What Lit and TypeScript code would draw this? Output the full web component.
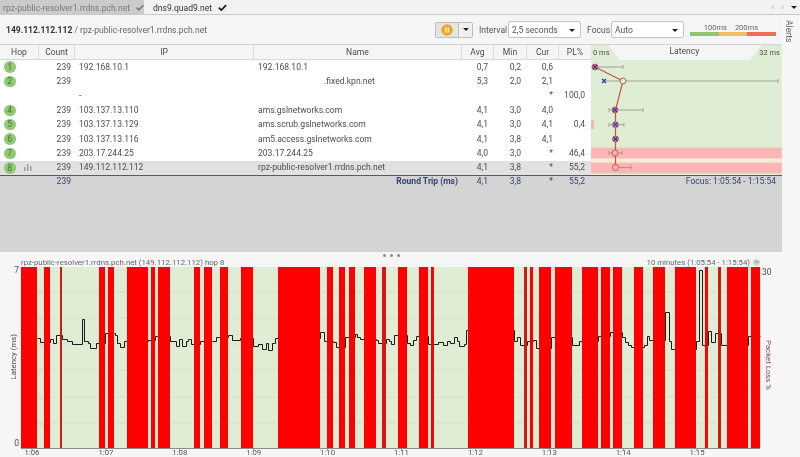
import { LitElement, css, html, svg } from 'lit';
import { customElement } from 'lit/decorators.js';

interface Hop {
  n: string;
  ip: string;
  name: string;
  avg: string;
  min: string;
  cur: string;
  pl: string;
}

const HOPS: Hop[] = [
  { n: '1', ip: '192.168.10.1', name: '192.168.10.1', avg: '0,7', min: '0,2', cur: '0,6', pl: '' },
  { n: '2', ip: '', name: '.fixed.kpn.net', avg: '5,3', min: '2,0', cur: '2,1', pl: '' },
  { n: '', ip: '-', name: '', avg: '', min: '', cur: '*', pl: '100,0' },
  { n: '4', ip: '103.137.13.110', name: 'ams.gslnetworks.com', avg: '4,1', min: '3,0', cur: '4,0', pl: '' },
  { n: '5', ip: '103.137.13.129', name: 'ams.scrub.gslnetworks.com', avg: '4,1', min: '3,0', cur: '4,1', pl: '0,4' },
  { n: '6', ip: '103.137.13.116', name: 'am5.access.gslnetworks.com', avg: '4,1', min: '3,8', cur: '4,1', pl: '' },
  { n: '7', ip: '203.17.244.25', name: '203.17.244.25', avg: '4,0', min: '3,0', cur: '*', pl: '46,4' },
  { n: '8', ip: '149.112.112.112', name: 'rpz-public-resolver1.rrdns.pch.net', avg: '4,1', min: '3,8', cur: '*', pl: '55,2' },
];

// packet loss bars, [x1, x2] on the page
const LOSS: number[][] = [
  [21, 37], [44, 50], [60, 62], [99, 105], [108, 114], [127, 148], [151, 155], [158, 170], [194, 200],
  [204, 212], [220, 228], [241, 253], [278, 320], [327, 333], [339, 345], [349, 355], [364, 376],
  [382, 386], [398, 407], [419, 428], [431, 434], [468, 514], [524, 527], [530, 533], [539, 551],
  [555, 572], [582, 598], [601, 610], [613, 622], [634, 643], [653, 665], [675, 696], [705, 708],
  [718, 721], [727, 748], [751, 760],
];
const DARK = [60, 382, 524, 718];

// latency steps: x where the step starts, y of the step
const STEPS: number[][] = [
  [37, 338], [40, 342], [50, 339], [53, 343], [56, 335], [62, 339], [67, 341], [72, 344], [82, 319],
  [84, 341], [88, 343], [90, 348], [96, 343], [105, 333], [115, 335], [117, 343], [120, 347], [124, 341],
  [148, 340], [155, 336], [170, 341], [176, 346], [179, 339], [182, 346], [186, 341], [188, 339],
  [191, 344], [200, 341], [212, 341], [216, 337], [228, 335], [232, 340], [240, 338], [253, 346],
  [258, 344], [262, 349], [266, 343], [268, 350], [272, 343], [275, 338], [320, 332], [324, 341],
  [333, 342], [336, 347], [345, 337], [355, 334], [357, 337], [360, 339], [376, 340], [378, 343],
  [386, 339], [389, 341], [391, 344], [394, 335], [407, 343], [410, 345], [413, 340], [416, 336],
  [428, 344], [438, 342], [443, 345], [447, 341], [450, 343], [454, 337], [457, 341], [459, 346],
  [464, 344], [466, 330], [514, 341], [517, 337], [520, 345], [527, 341], [533, 340], [536, 348],
  [551, 337], [572, 345], [579, 341], [598, 336], [610, 332], [622, 337], [625, 342], [628, 345],
  [631, 347], [644, 345], [647, 336], [649, 340], [665, 312], [669, 341], [671, 349], [696, 341],
  [699, 270], [702, 345], [708, 331], [711, 342], [715, 333], [721, 345], [748, 336], [760, 336],
];

const GRID = [292, 318, 344, 370, 397, 423];
const TIMES = ['1:06', '1:07', '1:08', '1:09', '1:10', '1:11', '1:12', '1:13', '1:14', '1:15'];

function stepPoints() {
  const out: string[] = [];
  let prevY = STEPS[0][1];
  for (const [x, y] of STEPS) {
    out.push(`${x + 0.5},${prevY + 0.5}`, `${x + 0.5},${y + 0.5}`);
    prevY = y;
  }
  return out.join(' ');
}

const check = (color: string) => html`<svg class="check" viewBox="0 0 10 8" width="9" height="7">
  <path d="M0.8 4.2 L3.6 7 L9.2 1.2" fill="none" stroke=${color} stroke-width="2"></path>
</svg>`;

@customElement('app-root')
export class AppRoot extends LitElement {
  static styles = css`
    :host {
      display: flex;
      flex-direction: column;
      width: 800px;
      height: 457px;
      overflow: hidden;
      background: #f6f6f6;
      color: #4d4d4d;
      font: 8.55px Roboto, sans-serif;
      filter: blur(0.25px);
    }

    .tabs {
      display: flex;
      align-items: center;
      flex: none;
      height: 15px;
      box-sizing: border-box;
      background: #f2f2f2;
      border-bottom: 1.5px solid #c9c9c9;
    }
    .tab {
      display: flex;
      align-items: center;
      height: 100%;
      gap: 6px;
      padding-top: 1px;
      box-sizing: border-box;
      white-space: nowrap;
    }
    .tab.off {
      width: 144px;
      flex: none;
      padding-left: 3px;
      background: #cbcbcb;
      color: #777;
    }
    .tab.on {
      padding-left: 9px;
      color: #333;
    }
    .tabnav {
      display: flex;
      align-items: center;
      gap: 7px;
      margin-left: auto;
      padding-right: 3px;
      color: #aaa;
      font-size: 9px;
    }

    .body {
      display: flex;
      flex: 1;
      min-height: 0;
    }
    .content {
      display: flex;
      flex-direction: column;
      width: 782px;
      flex: none;
    }
    .rail {
      flex: 1;
      padding: 5px 6px 0 0;
      color: #666;
      writing-mode: vertical-rl;
    }

    .toolbar {
      display: flex;
      align-items: center;
      flex: none;
      height: 30px;
      padding-left: 6px;
      box-sizing: border-box;
      border-bottom: 1.5px solid #d4d4d4;
      background: #f5f5f5;
      color: #666;
    }
    .toolbar b {
      color: #333;
      font-weight: 700;
    }
    .where {
      width: 429px;
      flex: none;
      padding-top: 1px;
    }
    .pause {
      display: flex;
      flex: none;
      width: 38px;
      height: 16px;
      border: 1px solid #bdbdbd;
      border-radius: 2px;
      background: #e4e4e4;
      box-sizing: border-box;
    }
    .pause .main {
      display: flex;
      align-items: center;
      justify-content: center;
      width: 22px;
      border-right: 1px solid #bdbdbd;
    }
    .pause .more {
      display: flex;
      align-items: center;
      justify-content: center;
      flex: 1;
      background: #f0f0f0;
    }
    .caret {
      width: 0;
      height: 0;
      border-left: 3px solid transparent;
      border-right: 3px solid transparent;
      border-top: 3px solid #222;
    }
    .lbl {
      flex: none;
      margin-left: 6px;
      color: #555;
    }
    .lbl.interval {
      width: 29px;
    }
    .lbl.focus {
      width: 24px;
    }
    .select {
      display: flex;
      align-items: center;
      justify-content: space-between;
      flex: none;
      width: 73px;
      height: 17px;
      padding: 1px 5px 0 3px;
      box-sizing: border-box;
      border: 1px solid #c4c4c4;
      border-radius: 2px;
      background: #fff;
      color: #555;
    }
    .legend {
      width: 86px;
      margin-left: 6px;
      flex: none;
    }
    .legend .nums {
      display: flex;
      justify-content: flex-end;
      gap: 8px;
      padding-right: 18px;
      font-size: 7.5px;
      line-height: 9px;
    }
    .legend .bar {
      display: flex;
      height: 4px;
    }
    .legend .bar i {
      flex: 1;
    }
    .legend .good {
      background: #8fc56e;
    }
    .legend .warn {
      background: #f4bf62;
    }
    .legend .bad {
      background: #ec6f5c;
    }

    .hops {
      display: flex;
      flex: none;
      height: 130px;
      background: #fff;
    }
    .table {
      width: 591px;
      flex: none;
    }
    .row,
    .head {
      display: grid;
      grid-template-columns: 39px 36px 179px 208px 32px 33px 32px 32px;
      align-items: center;
    }
    .row {
      height: 14.375px;
      line-height: 15px;
    }
    .row.selected {
      background: #e1e1e1;
    }
    .row > span {
      white-space: nowrap;
      overflow: hidden;
    }
    .head {
      height: 15px;
      line-height: 15px;
      box-sizing: border-box;
      border-bottom: 1px solid #d8d8d8;
      background: #f5f5f5;
      align-items: stretch;
    }
    .head span {
      text-align: center;
      border-right: 1px solid #dcdcdc;
    }
    .head span:last-child {
      border-right: 0;
    }
    .hopcell {
      display: flex;
      align-items: center;
      gap: 8px;
      padding-left: 4px;
    }
    .badge {
      display: flex;
      align-items: center;
      justify-content: center;
      width: 11.5px;
      height: 11.5px;
      border-radius: 50%;
      background: #93c878;
      color: #3c7f28;
      font-size: 8.5px;
      line-height: 1;
    }
    .num {
      text-align: right;
      padding-right: 6px;
    }
    .num.count {
      padding-right: 4px;
    }
    .txt {
      padding-left: 4px;
    }
    .txt.masked {
      padding-left: 70px;
    }

    .latency {
      display: flex;
      flex-direction: column;
      flex: 1;
      background: #e0edd5;
    }
    .lat-head {
      position: relative;
      display: flex;
      justify-content: space-between;
      flex: none;
      height: 15px;
      padding: 1px 2px 0;
      box-sizing: border-box;
      font-size: 7.5px;
      line-height: 13px;
    }
    .lat-head::before {
      content: '';
      position: absolute;
      inset: 0;
      background: #f5f5f5;
      clip-path: polygon(17px 0, 171px 0, 159px 100%, 29px 100%);
    }
    .lat-head span {
      position: relative;
    }
    .lat-head .title {
      font-size: 8.55px;
      margin-top: -1px;
    }
    .latency svg {
      display: block;
    }

    .summary {
      flex: none;
      height: 77px;
      border-top: 1.5px solid #5a5a5a;
      background: #d4d4d4;
      color: #33456e;
      box-sizing: border-box;
    }
    .summary .row {
      grid-template-columns: 39px 36px 387px 32px 33px 32px 32px 1fr;
      height: 11px;
      line-height: 11px;
    }
    .summary b {
      text-align: right;
      padding-right: 4px;
      font-weight: 700;
    }
    .summary .focus {
      text-align: right;
      padding-right: 6px;
    }

    .chart {
      display: flex;
      flex-direction: column;
      flex: 1;
      min-height: 0;
    }
    .chart-head {
      position: relative;
      display: flex;
      align-items: center;
      justify-content: space-between;
      flex: none;
      height: 15px;
      padding: 5px 22px 0 21px;
      box-sizing: border-box;
      color: #666;
      font-size: 7.8px;
    }
    .range {
      display: flex;
      align-items: center;
      gap: 3px;
    }
    .chev {
      display: flex;
      align-items: center;
      justify-content: center;
      width: 7px;
      height: 7px;
      border-radius: 50%;
      background: #d4d4d4;
    }
    .grip {
      position: absolute;
      left: 383px;
      top: 2px;
      display: flex;
      gap: 4px;
    }
    .grip i {
      width: 3px;
      height: 3px;
      border-radius: 50%;
      background: #888;
    }
    .plot {
      display: flex;
      flex: 1;
      min-height: 0;
    }
    .plot svg {
      display: block;
      flex: none;
    }
    .yaxis {
      display: flex;
      flex-direction: column;
      align-items: flex-end;
      justify-content: space-between;
      flex: none;
      width: 21px;
      height: 184px;
      margin-top: -2px;
      padding: 0 2px 0 0;
      box-sizing: border-box;
      line-height: 11px;
    }
    .yaxis em {
      font-style: normal;
      font-size: 7.8px;
      writing-mode: vertical-rl;
      transform: rotate(180deg);
    }
    .yaxis-r {
      display: flex;
      flex-direction: column;
      align-items: flex-start;
      gap: 62px;
      padding-left: 1px;
      line-height: 11px;
    }
    .yaxis-r em {
      font-style: normal;
      font-size: 7.8px;
      writing-mode: vertical-rl;
      color: #8a4a68;
      padding-left: 1px;
    }
  `;

  renderRow(h: Hop, i: number) {
    return html`<div class="row ${i === 7 ? 'selected' : ''}">
      <span class="hopcell">
        ${h.n ? html`<span class="badge">${h.n}</span>` : ''}
        ${i === 7
          ? html`<svg width="8" height="7" viewBox="0 0 8 7">
              <path d="M0 3h1.4v4H0zM3 0h1.4v7H3zM6 2h1.4v5H6z" fill="#999"></path>
            </svg>`
          : ''}
      </span>
      <span class="num count">${h.ip === '-' ? '' : '239'}</span>
      <span class="txt">${h.ip}</span>
      <span class="txt ${h.name.startsWith('.') ? 'masked' : ''}">${h.name}</span>
      <span class="num">${h.avg}</span>
      <span class="num">${h.min}</span>
      <span class="num">${h.cur}</span>
      <span class="num">${h.pl}</span>
    </div>`;
  }

  renderLatency() {
    const R = '#c2553c';
    const W = '#8a9488';
    const whisker = (y: number, a: number, b: number) => svg`
      <path d="M${a} ${y}H${b}M${a} ${y - 2}v4M${b} ${y - 2}v4" stroke=${W} stroke-width="0.8" fill="none"></path>`;
    const cross = (x: number, y: number) => svg`
      <path d="M${x - 2} ${y - 2}l4 4M${x + 2} ${y - 2}l-4 4" stroke="#2f3f9e" stroke-width="1.2"></path>`;
    const ring = (x: number, y: number, fill: string) => svg`
      <circle cx=${x} cy=${y} r="3" fill=${fill} stroke=${R} stroke-width="0.9"></circle>`;
    return svg`<svg width="191" height="115" viewBox="591 60 191 115">
      <rect x="591" y="120" width="3" height="9" fill="#f2b8ae"></rect>
      <rect x="591" y="158" width="191" height="5" fill="#f6ecd6"></rect>
      <rect x="591" y="148" width="191" height="10" fill="#ffb4ba" stroke="#edc4a8"></rect>
      <rect x="591" y="163" width="191" height="10" fill="#ffb4ba" stroke="#edc4a8"></rect>
      ${whisker(67, 595, 623)}
      ${whisker(81, 604, 778)}
      ${whisker(110, 609, 643)}
      ${whisker(124.7, 609, 624)}
      ${whisker(153, 609, 622)}
      ${whisker(167.5, 615, 631)}
      <polyline points="595,67 623,81 615.5,110 615.5,167.5" fill="none" stroke=${R} stroke-width="1.2"></polyline>
      ${ring(595, 67, '#b08cc8')}${cross(595, 67)}
      ${cross(604, 81)}${ring(623, 81, '#e0edd5')}
      ${ring(615, 110, '#b08cc8')}${cross(615, 110)}
      ${ring(615.5, 124.7, '#b08cc8')}${cross(615.5, 124.7)}
      ${ring(615.5, 139, '#b08cc8')}${cross(615.5, 139)}
      ${ring(615, 153, '#ffb4ba')}
      ${ring(615.5, 167.5, '#ffb4ba')}
    </svg>`;
  }

  renderPlot() {
    return svg`<svg width="740" height="190" viewBox="21 267 740 190">
      <rect x="21" y="267" width="739" height="181" fill="#e0edd5"></rect>
      ${GRID.map(
        (y) => svg`<line x1="21" x2="760" y1=${y} y2=${y} stroke="#d3e0c8" stroke-width="1"></line>`,
      )}
      ${GRID.map(
        (y, i) => svg`<text x="24" y=${y + 3} font-size="8" fill="#cfdcc4">${6 - i},0 ms</text>`,
      )}
      ${LOSS.map(
        ([a, b]) => svg`<rect x=${a - 1} y="267" width=${b - a + 2} height="181" fill="#f3e6d2"></rect>`,
      )}
      <polyline points=${stepPoints()} fill="none" stroke="#1a1a1a" stroke-width="1"></polyline>
      ${LOSS.map(
        ([a, b]) => svg`<rect x=${a} y="267" width=${b - a} height="181"
          fill=${DARK.includes(a) ? '#d01a14' : '#fe0000'}></rect>`,
      )}
      <line x1="21" x2="760" y1="448.5" y2="448.5" stroke="#8a8a8a" stroke-width="1"></line>
      ${TIMES.map((t, i) => {
        const x = 32 + i * 73.9;
        return svg`<line x1=${x} x2=${x} y1="449" y2="451" stroke="#888" stroke-width="0.8"></line>
          <text x=${x} y="455" text-anchor="middle" font-size="7.8" fill="#555">${t}</text>`;
      })}
    </svg>`;
  }

  render() {
    return html`
      <div class="tabs">
        <div class="tab off">rpz-public-resolver1.rrdns.pch.net ${check('#777')}</div>
        <div class="tab on">dns9.quad9.net ${check('#222')}</div>
        <div class="tabnav"><span>‹</span><span>›</span><span class="caret"></span></div>
      </div>
      <div class="body">
        <div class="content">
          <div class="toolbar">
            <div class="where"><b>149.112.112.112</b> / rpz-public-resolver1.rrdns.pch.net</div>
            <div class="pause">
              <span class="main">
                <svg width="12" height="12" viewBox="0 0 12 12">
                  <circle cx="6" cy="6" r="5.8" fill="#f0a524"></circle>
                  <path d="M4 3.2h1.4v5.6H4zM6.6 3.2H8v5.6H6.6z" fill="#fff3d6"></path>
                </svg>
              </span>
              <span class="more"><i class="caret"></i></span>
            </div>
            <span class="lbl interval">Interval</span>
            <div class="select">2,5 seconds <i class="caret"></i></div>
            <span class="lbl focus">Focus</span>
            <div class="select">Auto <i class="caret"></i></div>
            <div class="legend">
              <div class="nums"><span>100ms</span><span>200ms</span></div>
              <div class="bar"><i class="good"></i><i class="warn"></i><i class="bad"></i></div>
            </div>
          </div>
          <div class="hops">
            <div class="table">
              <div class="head">
                <span>Hop</span><span>Count</span><span>IP</span><span>Name</span>
                <span>Avg</span><span>Min</span><span>Cur</span><span>PL%</span>
              </div>
              ${HOPS.map((h, i) => this.renderRow(h, i))}
            </div>
            <div class="latency">
              <div class="lat-head">
                <span>0 ms</span><span class="title">Latency</span><span>32 ms</span>
              </div>
              ${this.renderLatency()}
            </div>
          </div>
          <div class="summary">
            <div class="row">
              <span></span>
              <span class="num count">239</span>
              <b>Round Trip (ms)</b>
              <span class="num">4,1</span>
              <span class="num">3,8</span>
              <span class="num">*</span>
              <span class="num">55,2</span>
              <span class="focus">Focus: 1:05:54 - 1:15:54</span>
            </div>
          </div>
          <div class="chart">
            <div class="chart-head">
              <span>rpz-public-resolver1.rrdns.pch.net (149.112.112.112) hop 8</span>
              <span class="grip"><i></i><i></i><i></i></span>
              <span class="range">10 minutes (1:05:54 - 1:15:54)
                <span class="chev">
                  <svg width="5" height="4" viewBox="0 0 5 4">
                    <path d="M0.5 1 L2.5 3 L4.5 1" fill="none" stroke="#777" stroke-width="0.8"></path>
                  </svg>
                </span>
              </span>
            </div>
            <div class="plot">
              <div class="yaxis"><span>7</span><em>Latency (ms)</em><span>0</span></div>
              ${this.renderPlot()}
              <div class="yaxis-r"><span>30</span><em>Packet Loss %</em></div>
            </div>
          </div>
        </div>
        <div class="rail">Alerts</div>
      </div>
    `;
  }
}
